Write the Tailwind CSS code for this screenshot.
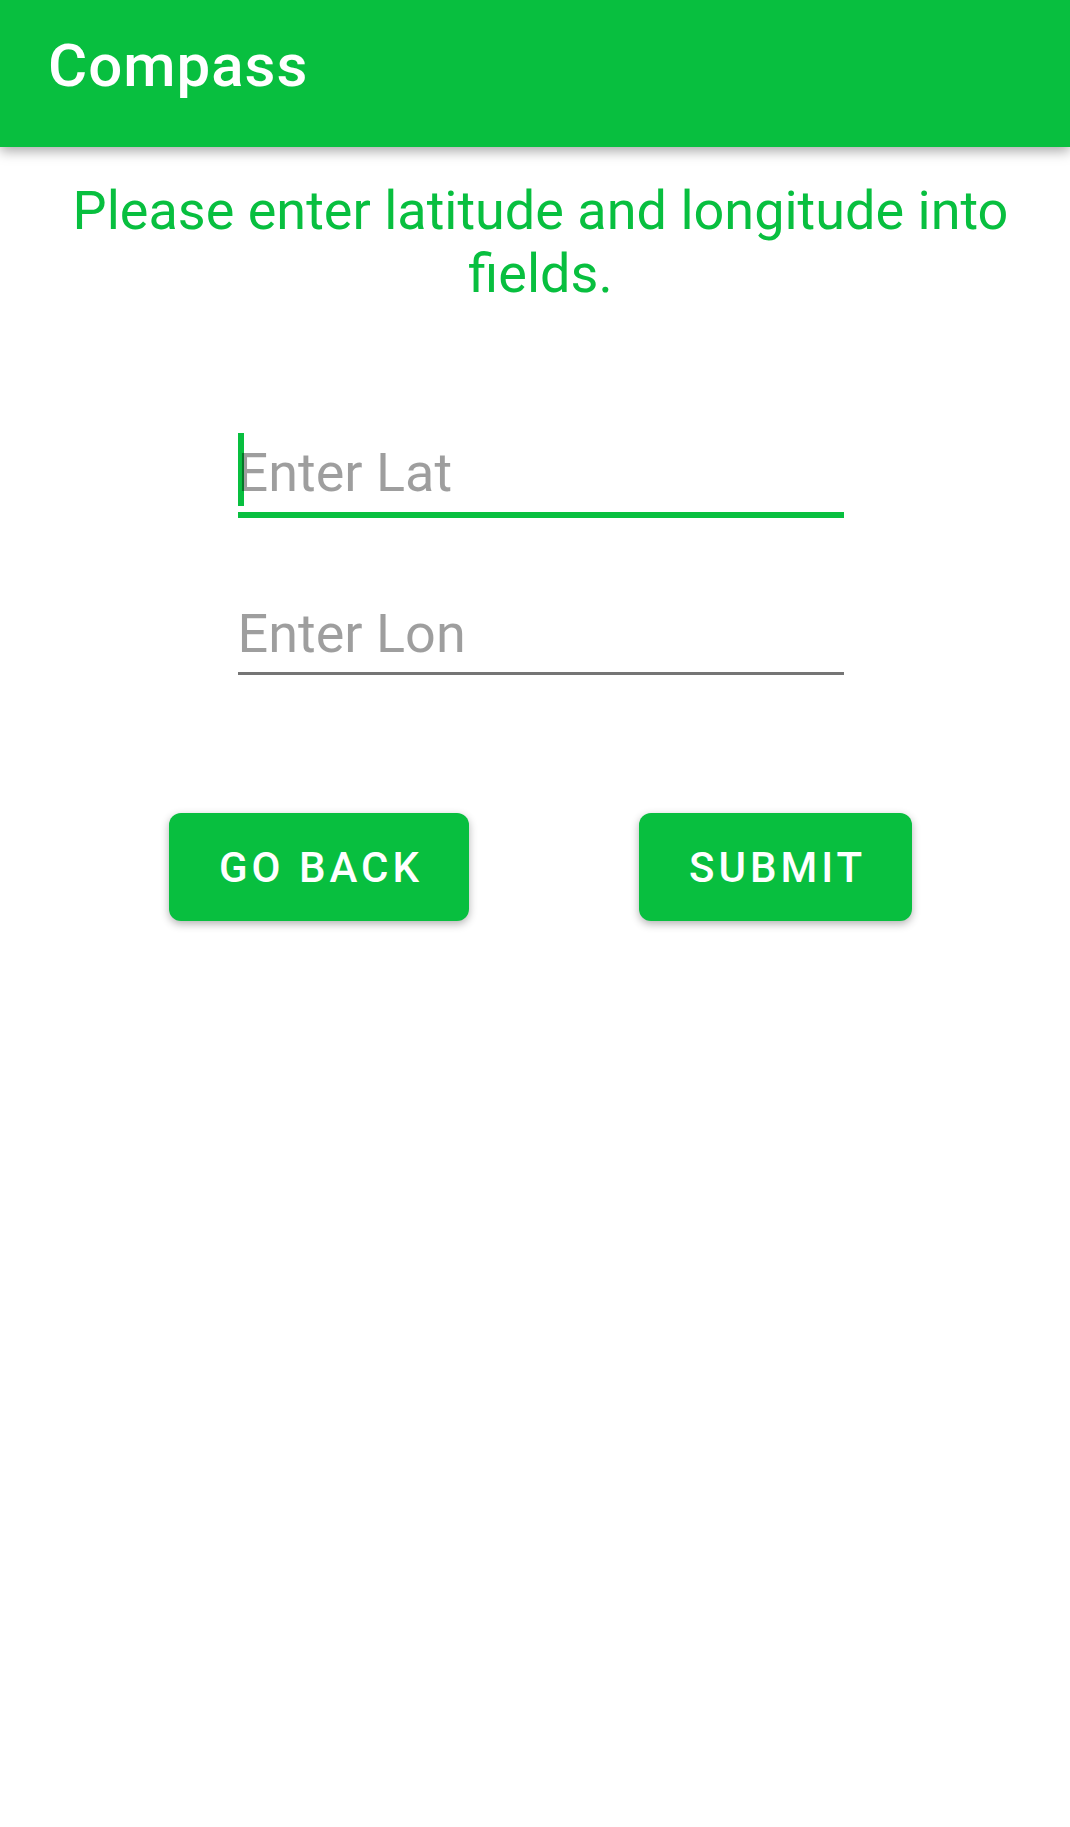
<!DOCTYPE html>
<html lang="en">
<head>
<meta charset="utf-8">
<meta name="viewport" content="width=device-width, initial-scale=1">
<title>Compass</title>
<script src="https://cdn.jsdelivr.net/npm/@tailwindcss/browser@4"></script>
</head>
<body class="min-h-screen bg-white font-['Roboto',sans-serif]">
<header class="bg-[#08bf3f] px-12 pt-8 pb-12 shadow-[0_4px_12px_rgba(0,0,0,0.35)]">
<h1 class="text-[60px] leading-[67px] font-medium tracking-[1px] text-white">Compass</h1>
</header>
<main class="flex flex-col items-center pt-8 pl-[11px]">
<p class="px-12 text-center text-[54px] leading-[63px] text-[#08bf3f]">Please enter latitude and longitude into fields.</p>
<form class="flex w-full flex-col items-center">
<div class="relative mt-32 w-full max-w-[606px] border-b-6 border-[#08bf3f]">
<!-- text cursor, under the translucent hint -->
<span class="absolute top-0 left-0 h-[73px] w-[6px] bg-[#08bf3f]"></span>
<input type="text" aria-label="Latitude" placeholder="Enter Lat" class="relative block h-[78px] w-full bg-transparent text-[54px] caret-transparent outline-none placeholder:text-black/38">
<div class="h-px"></div>
</div>
<div class="mt-[76px] w-full max-w-[606px] border-b-3 border-[#757575]">
<input type="text" aria-label="Longitude" placeholder="Enter Lon" class="block h-[78px] w-full bg-transparent text-[54px] outline-none placeholder:text-black/38">
</div>
<div class="mt-[138px] flex gap-[170px]">
<button type="button" class="h-[108px] rounded-xl bg-[#08bf3f] pr-[46px] pl-[50px] text-[42px] font-medium tracking-[4px] text-white shadow-[0_3px_8px_rgba(0,0,0,0.3)]">GO BACK</button>
<button type="submit" class="h-[108px] rounded-xl bg-[#08bf3f] pr-[46px] pl-[50px] text-[42px] font-medium tracking-[4px] text-white shadow-[0_3px_8px_rgba(0,0,0,0.3)]">SUBMIT</button>
</div>
</form>
</main>
</body>
</html>
